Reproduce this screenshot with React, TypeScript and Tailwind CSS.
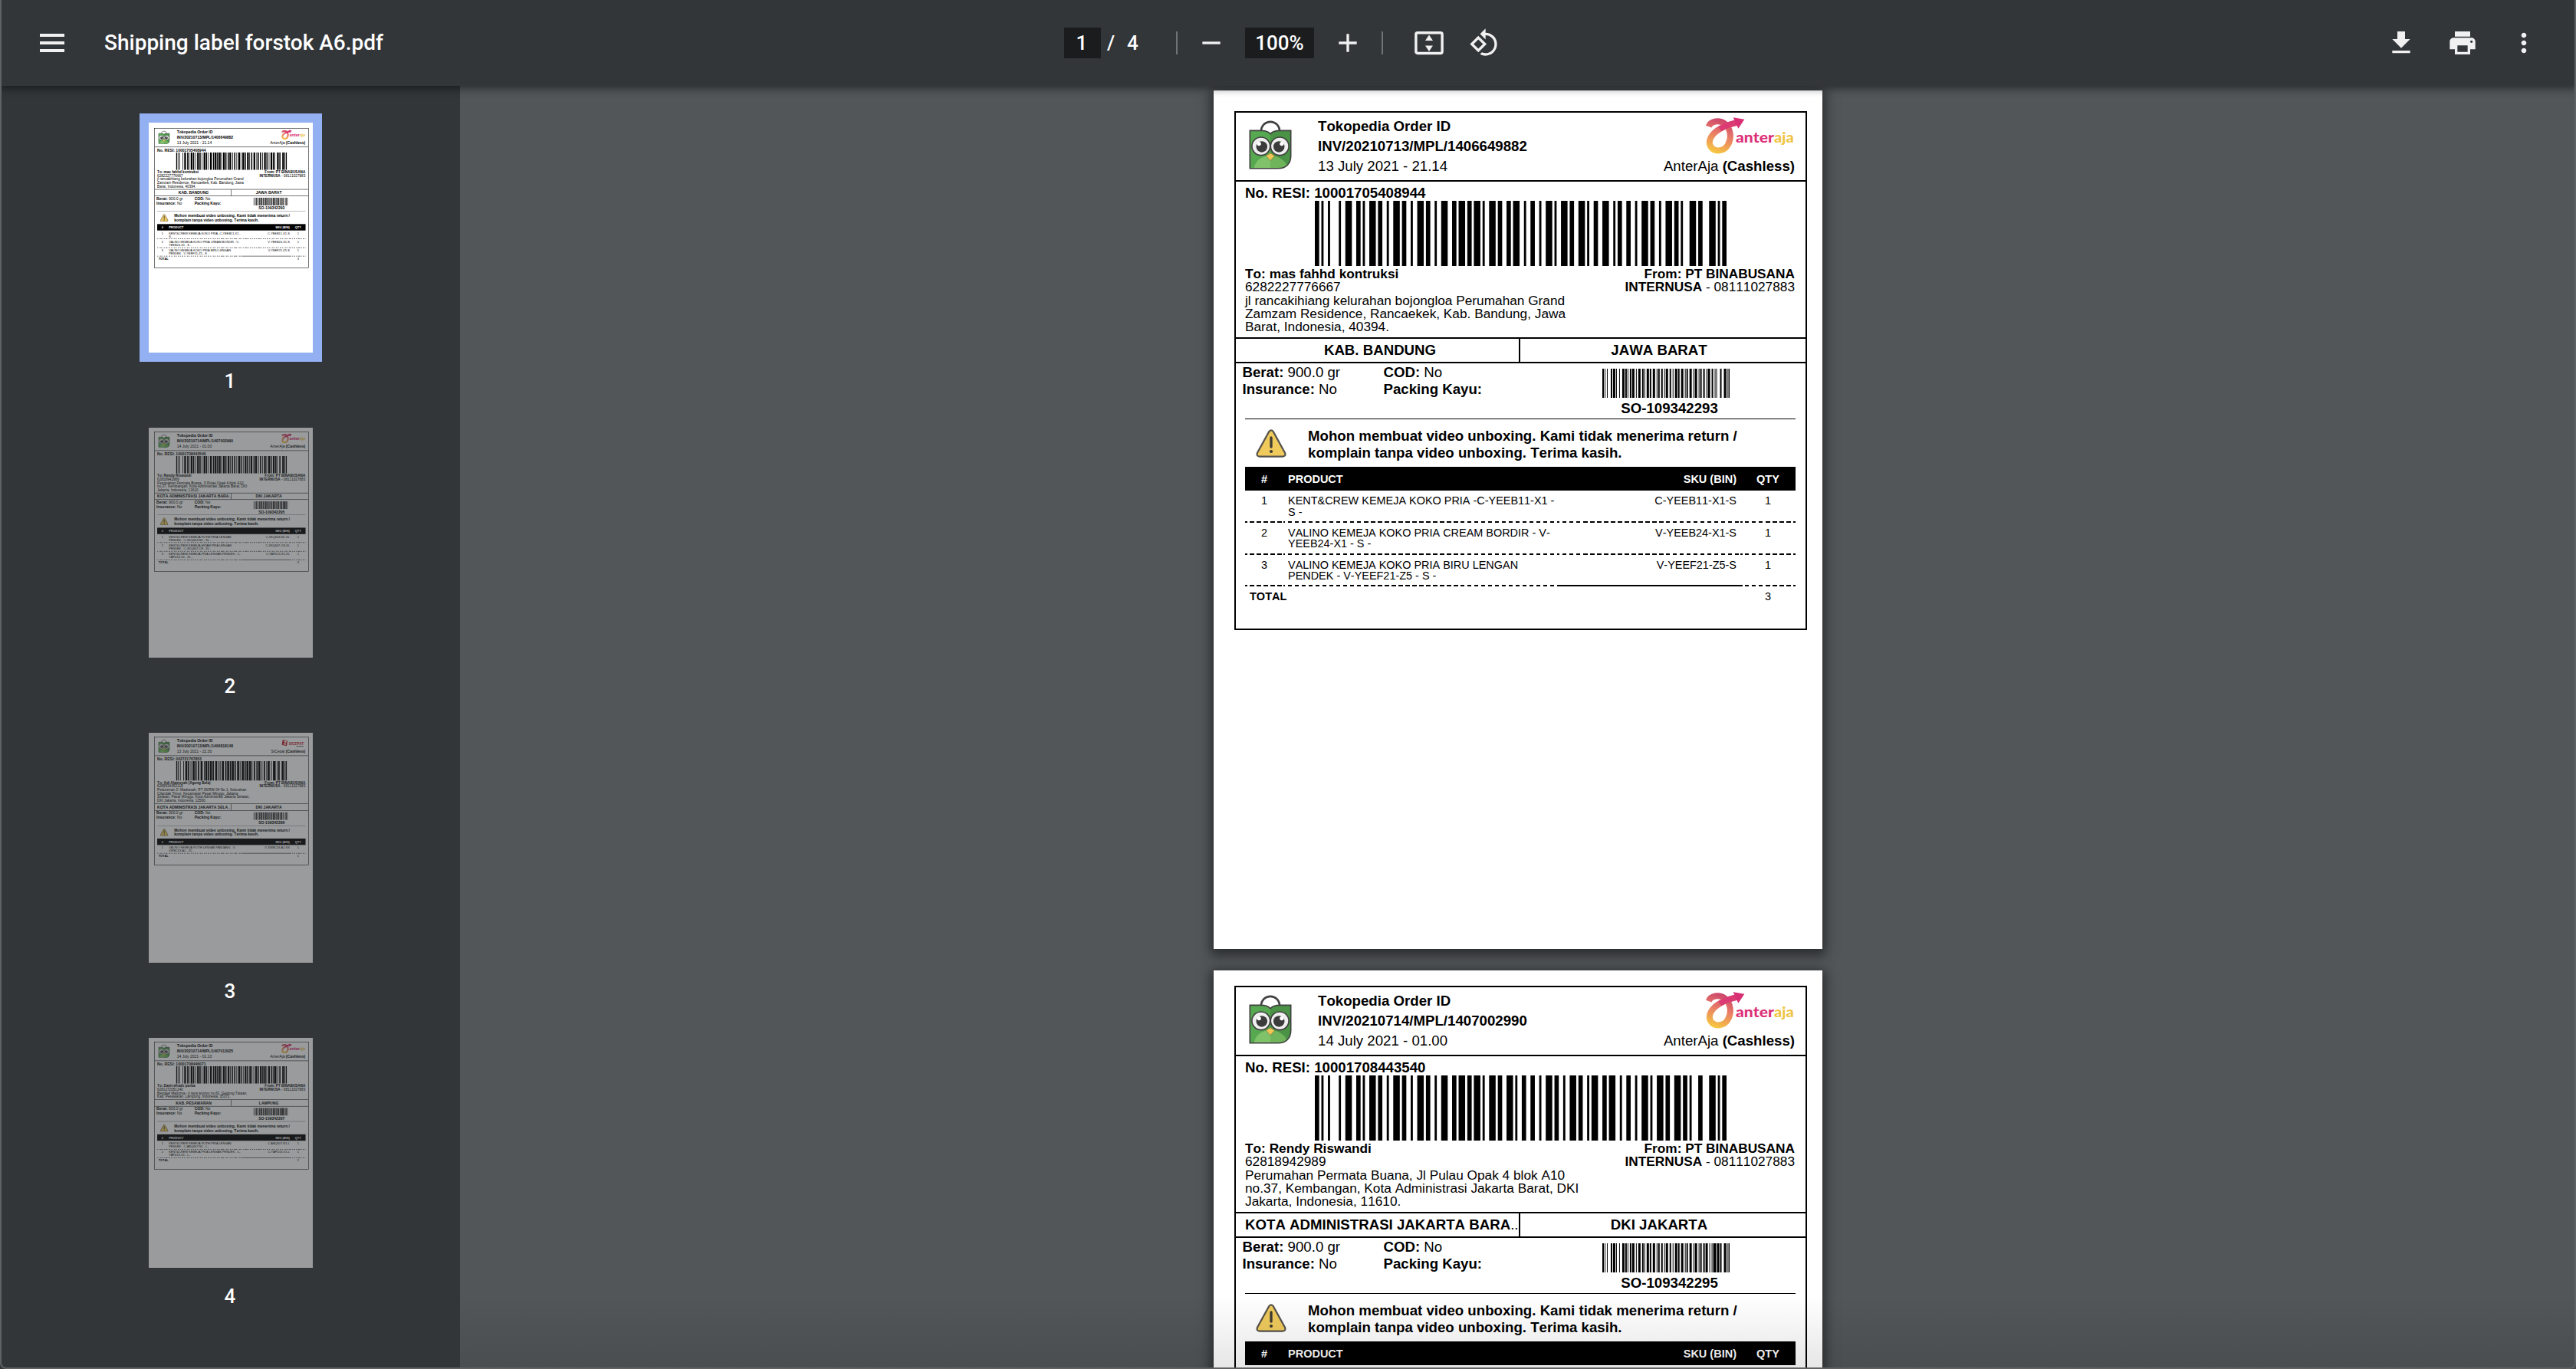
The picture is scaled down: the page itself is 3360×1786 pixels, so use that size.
import React from "react";

const CODE128 =
  "212222 222122 222221 121223 121322 131222 122213 122312 132212 221213 221312 231212 112232 122132 122231 113222 123122 123221 223211 221132 221231 213212 223112 312131 311222 321122 321221 312212 322112 322211 212123 212321 232121 111323 131123 131321 112313 132113 132311 211313 231113 231311 112133 112331 132131 113123 113321 133121 313121 211331 231131 213113 213311 213131 311123 311321 331121 312113 312311 332111 314111 221411 431111 111224 111422 121124 121421 141122 141221 112214 112412 122114 122411 142112 142211 241211 221114 413111 241112 134111 111242 121142 121241 114212 124112 124211 411212 421112 421211 212141 214121 412121 111143 111341 131141 114113 114311 411113 411311 113141 114131 311141 411131 211412 211214 211232 2331112".split(
    " ",
  );

/** Code 128 (set B) barcode stretched to the size given by className. */
function Barcode({ value, className }: { value: string; className: string }) {
  const codes = [104, ...value.split("").map((c) => c.charCodeAt(0) - 32)];
  const check = codes.reduce((sum, c, i) => sum + c * Math.max(i, 1), 0) % 103;
  const widths = [...codes, check, 106].map((c) => CODE128[c]).join("");
  let x = 0;
  let d = "";
  widths.split("").forEach((w, i) => {
    const n = Number(w);
    if (i % 2 === 0) d += `M${x} 0h${n}v10h-${n}z`;
    x += n;
  });
  return (
    <svg viewBox={`0 0 ${x} 10`} preserveAspectRatio="none" className={className}>
      <path d={d} fill="#000" />
    </svg>
  );
}

function TokopediaLogo() {
  return (
    <svg viewBox="86 50 170 193" className="h-16 w-14 shrink-0">
      <path d="M134 94C136 42 206 42 208 94" fill="#fff" stroke="#414141" strokeWidth="8" />
      <path d="M90 90H134C150 90 164 95 171 103C178 95 192 90 208 90H252V190C252 222 232 240 202 240H90Z" fill="#57a951" />
      <path d="M171 103C178 95 192 90 208 90H252V190C252 222 232 240 202 240H171Z" fill="#4a9245" />
      <path d="M106 240C112 206 140 190 171 190C202 190 226 208 236 228C226 238 214 240 202 240Z" fill="#80c269" />
      <path d="M171 190V240H202C214 240 226 238 236 228C226 208 202 190 171 190Z" fill="#6fb45b" />
      <path d="M90 90H134C150 90 164 95 171 103C178 95 192 90 208 90H252V190C252 222 232 240 202 240H90Z" fill="none" stroke="#414141" strokeWidth="5" />
      <circle cx="134" cy="152" r="36" fill="#efefef" stroke="#414141" strokeWidth="5" />
      <circle cx="208" cy="152" r="36" fill="#efefef" stroke="#414141" strokeWidth="5" />
      <circle cx="137" cy="154" r="22" fill="#3b3b3b" />
      <circle cx="205" cy="154" r="22" fill="#3b3b3b" />
      <circle cx="126" cy="142" r="8" fill="#fff" />
      <circle cx="216" cy="142" r="8" fill="#fff" />
      <path d="M154 190L171 179L188 190L171 209Z" fill="#f3c557" stroke="#6b5a2a" strokeWidth="1.5" />
    </svg>
  );
}

function AnterAjaLogo({ id }: { id: string }) {
  return (
    <svg viewBox="73 40 345 143" className="mr-[1.5px] h-12 w-[115px]">
      <defs>
        <linearGradient id={id} gradientUnits="userSpaceOnUse" x1="160" y1="50" x2="115" y2="182">
          <stop offset="0" stopColor="#c9406c" />
          <stop offset="0.45" stopColor="#e87a68" />
          <stop offset="1" stopColor="#f7c93f" />
        </linearGradient>
      </defs>
      <path
        d="M84 76C92 54 126 49 146 64C172 84 174 122 160 146C146 174 108 178 92 154C78 130 98 102 130 84C152 72 175 64 196 60"
        fill="none"
        stroke={`url(#${id})`}
        strokeWidth="24"
      />
      <path d="M128 85C154 70 176 63 200 60" fill="none" stroke="#dc3a74" strokeWidth="21" />
      <path d="M180 40L224 48L200 84Z" fill="#d92f74" />
      <text x="190" y="139" fontFamily="Lato" fontWeight="900" fontSize="55" fill="#dc2f78" textLength="150" lengthAdjust="spacingAndGlyphs">
        anter
      </text>
      <text x="340" y="139" fontFamily="Lato" fontWeight="900" fontSize="55" fill="#efc443" textLength="77" lengthAdjust="spacingAndGlyphs">
        aja
      </text>
    </svg>
  );
}

function SiCepatLogo() {
  return (
    <svg viewBox="0 0 115 48" className="mr-[1.5px] h-12 w-[115px]">
      <path d="M6 6L30 10L26 36L2 30Z" fill="#c4202b" />
      <path d="M11 14L24 13L13 27L22 28" fill="none" stroke="#fff" strokeWidth="4" />
      <text x="36" y="30" fontFamily="Liberation Sans" fontWeight="700" fontSize="21" fill="#c4202b" textLength="72" lengthAdjust="spacingAndGlyphs">
        SICEPAT
      </text>
      <path d="M72 37H108" stroke="#555" strokeWidth="3" />
    </svg>
  );
}

function WarningIcon() {
  return (
    <svg viewBox="0 0 40 37" className="mt-[13px] ml-[14px] h-[37px] w-10 shrink-0">
      <path
        d="M17.2 3.2Q20 -.6 22.8 3.2L38 30.6Q39.6 35.4 35 35.6H5Q.4 35.4 2 30.6Z"
        fill="#f0cb5c"
        stroke="#56534c"
        strokeWidth="2.2"
      />
      <path d="M20 11V23" stroke="#3f3c33" strokeWidth="3.4" strokeLinecap="round" />
      <circle cx="20" cy="29" r="2.1" fill="#3f3c33" />
    </svg>
  );
}

type Item = { name: [string, string]; sku: string };
type Order = {
  id: number;
  invoice: string;
  date: string;
  courier: "AnterAja" | "SiCepat";
  resi: string;
  to: string;
  phone: string;
  address: string[];
  city: string;
  clipped?: boolean;
  province: string;
  weight: string;
  so: string;
  items: Item[];
};

const ORDERS: Order[] = [
  {
    id: 1,
    invoice: "INV/20210713/MPL/1406649882",
    date: "13 July 2021 - 21.14",
    courier: "AnterAja",
    resi: "10001705408944",
    to: "mas fahhd kontruksi",
    phone: "6282227776667",
    address: ["jl rancakihiang kelurahan bojongloa Perumahan Grand", "Zamzam Residence, Rancaekek, Kab. Bandung, Jawa", "Barat, Indonesia, 40394."],
    city: "KAB. BANDUNG",
    province: "JAWA BARAT",
    weight: "900.0 gr",
    so: "SO-109342293",
    items: [
      { name: ["KENT&CREW KEMEJA KOKO PRIA -C-YEEB11-X1 -", "S -"], sku: "C-YEEB11-X1-S" },
      { name: ["VALINO KEMEJA KOKO PRIA CREAM BORDIR - V-", "YEEB24-X1 - S -"], sku: "V-YEEB24-X1-S" },
      { name: ["VALINO KEMEJA KOKO PRIA BIRU LENGAN", "PENDEK - V-YEEF21-Z5 - S -"], sku: "V-YEEF21-Z5-S" },
    ],
  },
  {
    id: 2,
    invoice: "INV/20210714/MPL/1407002990",
    date: "14 July 2021 - 01.00",
    courier: "AnterAja",
    resi: "10001708443540",
    to: "Rendy Riswandi",
    phone: "62818942989",
    address: ["Perumahan Permata Buana, Jl Pulau Opak 4 blok A10", "no.37, Kembangan, Kota Administrasi Jakarta Barat, DKI", "Jakarta, Indonesia, 11610."],
    city: "KOTA ADMINISTRASI JAKARTA BARA",
    clipped: true,
    province: "DKI JAKARTA",
    weight: "900.0 gr",
    so: "SO-109342295",
    items: [
      { name: ["KENT&CREW KEMEJA PUTIH PRIA LENGAN", "PENDEK - C-XKQ603-N1 - XL -"], sku: "C-XKQ603-N1-XL" },
      { name: ["KENT&CREW KEMEJA HITAM PRIA LENGAN", "PENDEK - C-XKQ607-O9 - XL -"], sku: "C-XKQ607-O9-XL" },
      { name: ["KENT&CREW KEMEJA PRIA LENGAN PENDEK - C-", "YAFD13-X1 - XL -"], sku: "C-YAFD13-X1-XL" },
    ],
  },
  {
    id: 3,
    invoice: "INV/20210713/MPL/1406818148",
    date: "13 July 2021 - 22.30",
    courier: "SiCepat",
    resi: "002721767853",
    to: "Adi Alamsyah (Agung Bela)",
    phone: "6289534453116",
    address: ["Pedurenan Jl. Madrasah, RT 09/RW 04 No 1, Kelurahan", "Cilandak Timur, Kecamatan Pasar Minggu, Jakarta", "Selatan, Pasar Minggu, Kota Administrasi Jakarta Selatan,", "DKI Jakarta, Indonesia, 12560."],
    city: "KOTA ADMINISTRASI JAKARTA SELA",
    clipped: true,
    province: "DKI JAKARTA",
    weight: "300.0 gr",
    so: "SO-109342296",
    items: [{ name: ["VALINO KEMEJA PUTIH LENGAN PANJANG - V-", "XWBC03-A1 - 15 -"], sku: "V-XWBC03-A1-SS" }],
  },
  {
    id: 4,
    invoice: "INV/20210714/MPL/1407013025",
    date: "14 July 2021 - 01.10",
    courier: "AnterAja",
    resi: "10001708446071",
    to: "Davit efrado purba",
    phone: "6281272051140",
    address: ["Bengkel Maduma - jl raya wiyono no.62, Gedong Tataan,", "Kab. Pesawaran, Lampung, Indonesia, 35371."],
    city: "KAB. PESAWARAN",
    province: "LAMPUNG",
    weight: "600.0 gr",
    so: "SO-109342297",
    items: [
      { name: ["KENT&CREW KEMEJA PUTIH PRIA LENGAN", "PENDEK - C-ABQ607-N1 - L -"], sku: "C-ABQ607-N1-L" },
      { name: ["KENT&CREW KEMEJA PRIA LENGAN PENDEK - C-", "YAFD13-X1 - L -"], sku: "C-YAFD13-X1-L" },
    ],
  },
];

const COLS = "grid grid-cols-[50px_358px_238px_72px]";

function DashedRule({ last }: { last: boolean }) {
  const dash = "bg-[repeating-linear-gradient(90deg,#000_0_2.5px,transparent_2.5px_6px,#000_6px_9px)]";
  return (
    <div className={`${COLS} h-[2px]`}>
      <div className={dash} />
      <div className={dash} />
      <div className={last ? "bg-black" : dash} />
      <div className={dash} />
    </div>
  );
}

function PdfPage({ order, scope }: { order: Order; scope: string }) {
  return (
    <div
      className={`h-[1120px] w-[794px] bg-white px-[27px] text-[18.67px] text-black [font-family:'Liberation_Sans',Arial,sans-serif] [font-kerning:none] ${
        order.id === 1 ? "pt-[27px]" : "pt-[20px]"
      }`}
    >
      <div className="w-[747px] border-2 border-black">
        <div className="flex h-[90px] border-b-2 border-black pl-[17px] pr-[14px]">
          <div className="pt-[10px]">
            <TokopediaLogo />
          </div>
          <div className="ml-[34px] whitespace-nowrap pt-[5px] leading-[26px]">
            <div className="font-bold">Tokopedia Order ID</div>
            <div className="font-bold">{order.invoice}</div>
            <div>{order.date}</div>
          </div>
          <div className="ml-auto flex flex-col items-end pt-[6px]">
            {order.courier === "AnterAja" ? <AnterAjaLogo id={`swoosh-${scope}-${order.id}`} /> : <SiCepatLogo />}
            <div className="mt-[3px] leading-[26px]">
              {order.courier} <b>(Cashless)</b>
            </div>
          </div>
        </div>

        <div className="border-b-2 border-black pb-[5px] pl-[12px] pr-[14px] pt-[4px]">
          <div className="font-bold leading-[21px]">No. RESI: {order.resi}</div>
          <Barcode
            value={order.resi}
            className={order.courier === "AnterAja" ? "ml-[91px] block h-[85px] w-[537px]" : "ml-[91px] block h-[95px] w-[537px]"}
          />
          <div className="mt-[2px] flex justify-between whitespace-nowrap text-[17.25px] leading-[17.25px]">
            <div>
              <div className="font-bold">To: {order.to}</div>
              <div>{order.phone}</div>
              {order.address.map((line) => (
                <div key={line}>{line}</div>
              ))}
            </div>
            <div className="text-right">
              <div className="font-bold">From: PT BINABUSANA</div>
              <div>
                <b>INTERNUSA</b> - 08111027883
              </div>
            </div>
          </div>
        </div>

        <div className="flex h-8 border-b-2 border-black text-center font-bold leading-[29px]">
          <div
            className={
              order.clipped
                ? "w-[371px] whitespace-nowrap border-r-2 border-black pl-[12px] text-left"
                : "w-[371px] border-r-2 border-black pl-[12px] pr-[5px]"
            }
          >
            {order.city}
            {order.clipped && <span className="font-normal">..</span>}
          </div>
          <div className="flex-1 pr-[10px]">{order.province}</div>
        </div>

        <div className="flex h-[72px] pl-[8.5px] leading-[22px]">
          <div className="w-[184px] pt-[.5px]">
            <div>
              <b>Berat:</b> {order.weight}
            </div>
            <div>
              <b>Insurance:</b> No
            </div>
          </div>
          <div className="w-[286px] pt-[.5px]">
            <div>
              <b>COD:</b> No
            </div>
            <div className="font-bold">Packing Kayu:</div>
          </div>
          <div className="w-[174px] pt-[7px]">
            <Barcode value={order.so} className="-ml-px block h-[38px] w-[166.5px]" />
            <div className="mt-[3px] text-center font-bold leading-[21px]">{order.so}</div>
          </div>
        </div>

        <div className="ml-[12px] w-[718px] border-t border-black">
          <div className="flex h-[62px]">
            <WarningIcon />
            <div className="ml-[28px] whitespace-nowrap pt-[10.5px] font-bold leading-[22px]">
              <div>Mohon membuat video unboxing. Kami tidak menerima return /</div>
              <div>komplain tanpa video unboxing. Terima kasih.</div>
            </div>
          </div>

          <div className={`${COLS} h-[31px] bg-black text-[14.5px] font-bold leading-[32px] text-white`}>
            <div className="text-center">#</div>
            <div className="pl-[6px]">PRODUCT</div>
            <div className="pr-[5px] text-right">SKU (BIN)</div>
            <div className="text-center">QTY</div>
          </div>
          {order.items.map((item, i) => (
            <div key={item.sku}>
              <div className={`${COLS} h-[39.7px] whitespace-nowrap pt-[6px] text-[14.45px] leading-[14.5px]`}>
                <div className="text-center">{i + 1}</div>
                <div className="pl-[6px]">
                  <div>{item.name[0]}</div>
                  <div>{item.name[1]}</div>
                </div>
                <div className="pr-[5px] text-right">{item.sku}</div>
                <div className="text-center">1</div>
              </div>
              <DashedRule last={i === order.items.length - 1} />
            </div>
          ))}
          <div className="flex h-[55px] justify-between pl-[6px] pt-[6px] text-[14.5px] leading-[15px]">
            <div className="font-bold">TOTAL</div>
            <div className="w-[72px] text-center">{order.items.length}</div>
          </div>
        </div>
      </div>
    </div>
  );
}

function Icon({ d, className = "" }: { d: string; className?: string }) {
  return (
    <svg viewBox="0 0 24 24" className={`size-10 shrink-0 ${className}`} fill="#f1f1f1">
      <path d={d} />
    </svg>
  );
}

function Toolbar() {
  return (
    <header className="relative z-20 flex h-28 shrink-0 items-center bg-[#323639] text-[26px] font-medium text-white shadow-[0_2px_10px_2px_rgba(0,0,0,0.45)]">
      <div className="flex w-[1388px] items-center pl-[52px]">
        <div className="flex w-8 flex-col gap-[6px]">
          <div className="h-1 bg-[#f1f1f1]" />
          <div className="h-1 bg-[#f1f1f1]" />
          <div className="h-1 bg-[#f1f1f1]" />
        </div>
        <div className="ml-[52px] text-[28px]">Shipping label forstok A6.pdf</div>
      </div>
      <div className="flex h-10 w-12 items-center justify-center bg-[#1b1c1e] pr-[2px]">1</div>
      <div className="ml-2 w-[26px]">/</div>
      <div className="w-16">4</div>
      <div className="h-[30px] w-[2px] bg-[#707376]" />
      <Icon className="ml-6" d="M19 13H5v-2h14v2z" />
      <div className="ml-6 flex h-10 w-[90px] items-center justify-center bg-[#1b1c1e]">100%</div>
      <Icon className="ml-6" d="M19 13h-6v6h-2v-6H5v-2h6V5h2v6h6v2z" />
      <div className="ml-6 h-[30px] w-[2px] bg-[#707376]" />
      <svg viewBox="0 0 40 40" className="ml-10 size-10 shrink-0">
        <rect x="2.9" y="6.7" width="34.2" height="26.8" rx="2" fill="none" stroke="#f1f1f1" strokeWidth="3.4" />
        <path d="M20 9.5L25 17H15ZM15 23.5H25L20 31Z" fill="#f1f1f1" />
      </svg>
      <Icon
        className="ml-8"
        d="M7.34 6.41L.86 12.9l6.49 6.48 6.49-6.48-6.5-6.49zM3.69 12.9l3.66-3.66L11 12.9l-3.66 3.66-3.65-3.66zm15.67-6.26C17.61 4.88 15.3 4 13 4V.76L8.76 5 13 9.24V6c1.79 0 3.58.68 4.95 2.05 2.73 2.73 2.73 7.17 0 9.9C16.58 19.32 14.79 20 13 20c-.97 0-1.94-.21-2.84-.61l-1.49 1.49C10.02 21.62 11.51 22 13 22c2.3 0 4.61-.88 6.36-2.64 3.52-3.51 3.52-9.21 0-12.72z"
      />
      <div className="ml-auto flex gap-10 pr-12">
        <Icon d="M19 9h-4V3H9v6H5l7 7 7-7zM5 18v2h14v-2H5z" />
        <Icon d="M19 8H5c-1.66 0-3 1.34-3 3v6h4v4h12v-4h4v-6c0-1.66-1.34-3-3-3zm-3 11H8v-5h8v5zm3-7c-.55 0-1-.45-1-1s.45-1 1-1 1 .45 1 1-.45 1-1 1zm-1-9H6v4h12V3z" />
        <Icon d="M12 8c1.1 0 2-.9 2-2s-.9-2-2-2-2 .9-2 2 .9 2 2 2zm0 2c-1.1 0-2 .9-2 2s.9 2 2 2 2-.9 2-2-.9-2-2-2zm0 6c-1.1 0-2 .9-2 2s.9 2 2 2 2-.9 2-2-.9-2-2-2z" />
      </div>
    </header>
  );
}

function Thumbnail({ order }: { order: Order }) {
  const active = order.id === 1;
  return (
    <div className="flex h-[398px] w-[238px] flex-col items-center">
      <div className={active ? "bg-[#93b1f2] p-3" : "p-3"}>
        <div className={active ? "h-[300px] w-[214px] overflow-hidden" : "h-[300px] w-[214px] overflow-hidden opacity-50"}>
          <div className="origin-top-left scale-[0.2695]">
            <PdfPage order={order} scope="thumb" />
          </div>
        </div>
      </div>
      <div className="mt-2 pr-[2px] text-[26px] font-medium leading-[34px] text-white">{order.id}</div>
    </div>
  );
}

export default function App() {
  return (
    <div className="relative flex h-[1786px] w-[3360px] flex-col overflow-hidden bg-[#525659] [font-family:Roboto,sans-serif]">
      <Toolbar />
      <div className="flex min-h-0 flex-1">
        <aside className="flex w-[600px] shrink-0 flex-col items-center overflow-hidden bg-[#323639] pl-[2px] pt-9">
          {ORDERS.map((order) => (
            <Thumbnail key={order.id} order={order} />
          ))}
        </aside>
        <main className="flex flex-1 flex-col gap-7 overflow-hidden pl-[983px] pt-[6px]">
          {ORDERS.slice(0, 2).map((order) => (
            <div key={order.id} className="w-[794px] shadow-[0_4px_14px_4px_rgba(0,0,0,0.5)]">
              <PdfPage order={order} scope="page" />
            </div>
          ))}
        </main>
      </div>
      <div className="pointer-events-none absolute bottom-0 left-[600px] right-0 z-20 h-24 bg-gradient-to-t from-black/10 to-transparent" />
      <div className="pointer-events-none absolute inset-0 z-30 rounded-b-lg border-x-2 border-b-2 border-[#5f6264]" />
    </div>
  );
}
